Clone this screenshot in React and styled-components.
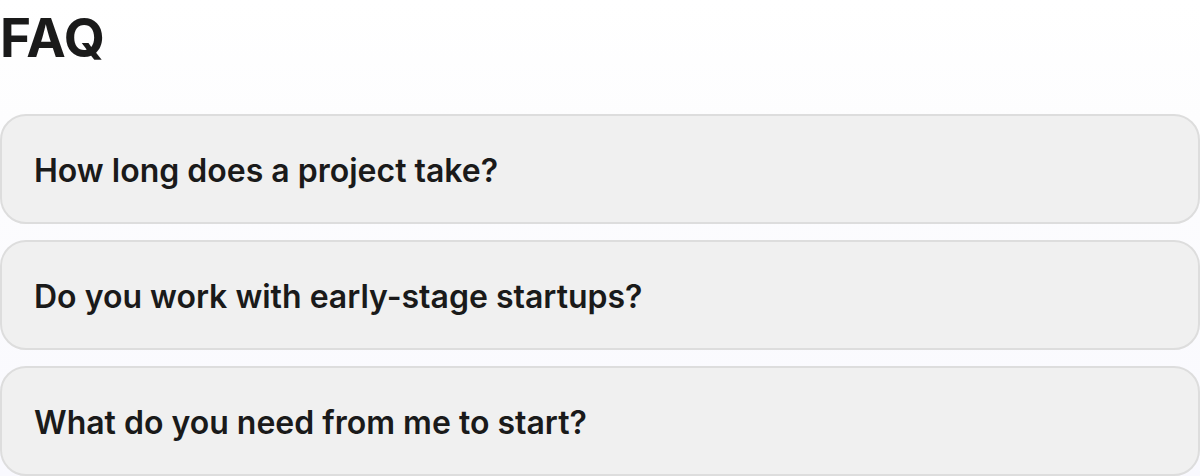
import React from "react";
import styled, { createGlobalStyle } from "styled-components";

const Global = createGlobalStyle`
  html, body { margin: 0; padding: 0; }
  body {
    font-family: Inter, "Noto Sans", "Liberation Sans", sans-serif;
    background: linear-gradient(180deg, #ffffff 0px, #fdfdfe 120px, #f9f9fe 476px);
    min-height: 476px;
    color: #1a1a1a;
  }
`;

const Section = styled.section`
  display: flex;
  flex-direction: column;
  width: 1200px;
`;

const Title = styled.h2`
  margin: 0 0 48px 0;
  padding-top: 10px;
  font-size: 53px;
  line-height: 56px;
  font-weight: 700;
  letter-spacing: 0;
  color: #1a1a1a;
`;

const List = styled.div`
  display: flex;
  flex-direction: column;
  gap: 16px;
`;

const Item = styled.div`
  box-sizing: border-box;
  height: 110px;
  display: flex;
  align-items: center;
  padding: 0 32px;
  background: #f0f0f0;
  border: 2px solid #dddddd;
  border-radius: 26px;
`;

const Question = styled.span`
  font-size: 32px;
  font-weight: 600;
  color: #1a1a1a;
  margin-top: 2px;
`;

const faqs = [
  "How long does a project take?",
  "Do you work with early-stage startups?",
  "What do you need from me to start?",
];

export default function App() {
  return (
    <>
      <Global />
      <Section>
        <Title>FAQ</Title>
        <List>
          {faqs.map((q) => (
            <Item key={q}>
              <Question>{q}</Question>
            </Item>
          ))}
        </List>
      </Section>
    </>
  );
}
